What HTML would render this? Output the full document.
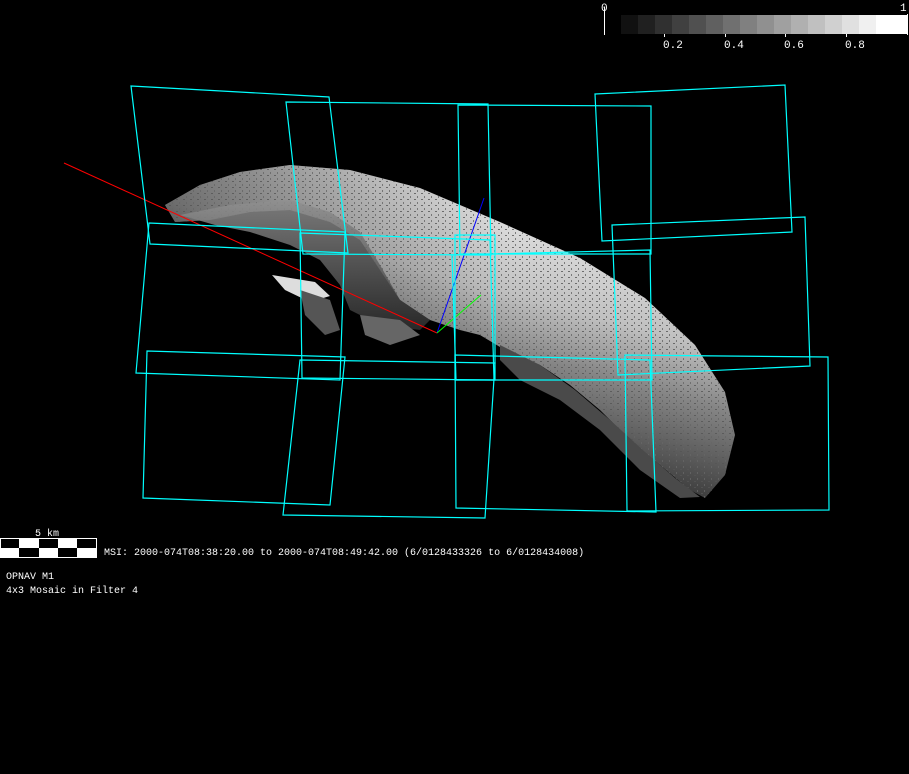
<!DOCTYPE html>
<html><head><style>
html,body{margin:0;padding:0;background:#000;}
body{width:909px;height:774px;overflow:hidden;position:relative;font-family:"Liberation Mono",monospace;}
svg{position:absolute;left:0;top:0;}
</style></head><body>
<svg width="909" height="774" viewBox="0 0 909 774" xmlns="http://www.w3.org/2000/svg">
<defs>
<linearGradient id="g1" x1="0.7" y1="0.2" x2="0.45" y2="0.75">
<stop offset="0" stop-color="#e0e0e0"/>
<stop offset="0.35" stop-color="#c0c0c0"/>
<stop offset="0.6" stop-color="#868686"/>
<stop offset="1" stop-color="#404040"/>
</linearGradient>
<linearGradient id="gx" x1="0" y1="0" x2="1" y2="0">
<stop offset="0" stop-color="#000" stop-opacity="0.45"/>
<stop offset="0.4" stop-color="#000" stop-opacity="0.15"/>
<stop offset="0.6" stop-color="#000" stop-opacity="0"/>
</linearGradient>
<linearGradient id="g2" x1="0" y1="0" x2="0" y2="1">
<stop offset="0" stop-color="#909090"/>
<stop offset="0.5" stop-color="#606060"/>
<stop offset="1" stop-color="#303030"/>
</linearGradient>
<pattern id="sp" width="7" height="6" patternUnits="userSpaceOnUse">
<rect x="1" y="1" width="2" height="1" fill="#555"/>
<rect x="4" y="4" width="1" height="2" fill="#666"/>
</pattern>
<clipPath id="ac"><path d="M165,205 L200,185 L240,172 L290,165 L350,170 L420,188 L500,222 L580,258 L645,298 L695,345 L725,392 L735,435 L725,475 L705,498 L690,490 L660,465 L630,440 L600,410 L570,385 L540,365 L505,350 L480,335 L460,330 L430,320 L400,300 L380,270 L360,240 L330,222 L290,210 L250,212 L210,220 L175,222 Z"/></clipPath>
</defs>
<!-- asteroid -->
<g clip-path="url(#ac)">
<rect x="160" y="160" width="580" height="345" fill="url(#g1)"/>
<rect x="160" y="160" width="580" height="345" fill="url(#gx)"/>
<rect x="160" y="160" width="580" height="345" fill="url(#sp)" opacity="0.8"/>
</g>
<path d="M180,215 L230,205 L290,200 L330,212 L360,232 L380,265 L400,300 L430,320 L420,330 L380,325 L350,310 L340,285 L320,260 L290,245 L250,232 L215,225 Z" fill="url(#g2)" opacity="0.85"/>
<path d="M500,345 L540,365 L575,390 L610,420 L645,452 L675,478 L700,497 L680,498 L640,470 L600,430 L560,400 L520,380 L500,360 Z" fill="#4a4a4a"/>
<path d="M272,275 L315,282 L330,296 L310,302 L285,290 Z" fill="#ddd"/>
<path d="M300,290 L330,300 L340,330 L325,335 L305,315 Z" fill="#555"/>
<path d="M360,315 L400,320 L420,335 L390,345 L365,335 Z" fill="#666"/>
<!-- axes -->
<line x1="64" y1="163" x2="437" y2="333" stroke="#f00" stroke-width="1"/>
<line x1="437" y1="333" x2="484" y2="198" stroke="#00f" stroke-width="1"/>
<line x1="437" y1="333" x2="481" y2="295" stroke="#0f0" stroke-width="1"/>
<!-- frames -->
<g fill="none" stroke="#0ff" stroke-width="1.2">
<polygon points="131,86 329,97 348,253 150,244"/>
<polygon points="286,102 488,104 491,255 303,254"/>
<polygon points="458,105 651,106 651,254 460,254"/>
<polygon points="595,94 785,85 792,232 602,241"/>
<polygon points="149,223 345,232 340,380 136,373"/>
<polygon points="300,233 490,240 494,380 302,378"/>
<polygon points="455,235 495,235 495,380 455,380"/>
<polygon points="452,255 650,250 652,380 456,380"/>
<polygon points="612,225 805,217 810,366 618,375"/>
<polygon points="147,351 345,357 330,505 143,498"/>
<polygon points="300,360 495,363 485,518 283,515"/>
<polygon points="455,355 650,360 656,512 456,508"/>
<polygon points="625,355 828,357 829,510 627,511"/>
</g>
<!-- colorbar -->
<line x1="604.5" y1="7" x2="604.5" y2="35" stroke="#fff"/>
<g>
<rect x="621" y="15" width="17" height="19" fill="#111"/>
<rect x="638" y="15" width="17" height="19" fill="#202020"/>
<rect x="655" y="15" width="17" height="19" fill="#303030"/>
<rect x="672" y="15" width="17" height="19" fill="#404040"/>
<rect x="689" y="15" width="17" height="19" fill="#505050"/>
<rect x="706" y="15" width="17" height="19" fill="#606060"/>
<rect x="723" y="15" width="17" height="19" fill="#707070"/>
<rect x="740" y="15" width="17" height="19" fill="#808080"/>
<rect x="757" y="15" width="17" height="19" fill="#909090"/>
<rect x="774" y="15" width="17" height="19" fill="#a0a0a0"/>
<rect x="791" y="15" width="17" height="19" fill="#b0b0b0"/>
<rect x="808" y="15" width="17" height="19" fill="#c0c0c0"/>
<rect x="825" y="15" width="17" height="19" fill="#d0d0d0"/>
<rect x="842" y="15" width="17" height="19" fill="#e0e0e0"/>
<rect x="859" y="15" width="17" height="19" fill="#f0f0f0"/>
<rect x="876" y="15" width="31" height="19" fill="#fff"/>
</g>
<line x1="907.5" y1="14" x2="907.5" y2="35" stroke="#fff"/>
<g stroke="#fff"><line x1="664.5" y1="34" x2="664.5" y2="37"/><line x1="725.5" y1="34" x2="725.5" y2="37"/><line x1="785.5" y1="34" x2="785.5" y2="37"/><line x1="846.5" y1="34" x2="846.5" y2="37"/></g>
<g fill="#fff" font-family="Liberation Mono, monospace" font-size="11">
<text x="601" y="11">0</text>
<text x="900" y="11">1</text>
<text x="663" y="48">0.2</text>
<text x="724" y="48">0.4</text>
<text x="784" y="48">0.6</text>
<text x="845" y="48">0.8</text>
</g>
<!-- scale bar -->
<rect x="0" y="538" width="97" height="20" fill="#fff"/>
<rect x="1" y="539" width="18" height="9" fill="#000"/>
<rect x="39" y="539" width="19" height="9" fill="#000"/>
<rect x="77" y="539" width="19" height="9" fill="#000"/>
<rect x="19" y="548" width="20" height="9" fill="#000"/>
<rect x="58" y="548" width="19" height="9" fill="#000"/>
<g fill="#fff" font-family="Liberation Mono, monospace" font-size="10">
<text x="35" y="536">5 km</text>
<text x="104" y="555">MSI:  2000-074T08:38:20.00 to 2000-074T08:49:42.00 (6/0128433326 to 6/0128434008)</text>
<text x="6" y="579">OPNAV M1</text>
<text x="6" y="593">4x3 Mosaic in Filter 4</text>
</g>
</svg>
</body></html>
